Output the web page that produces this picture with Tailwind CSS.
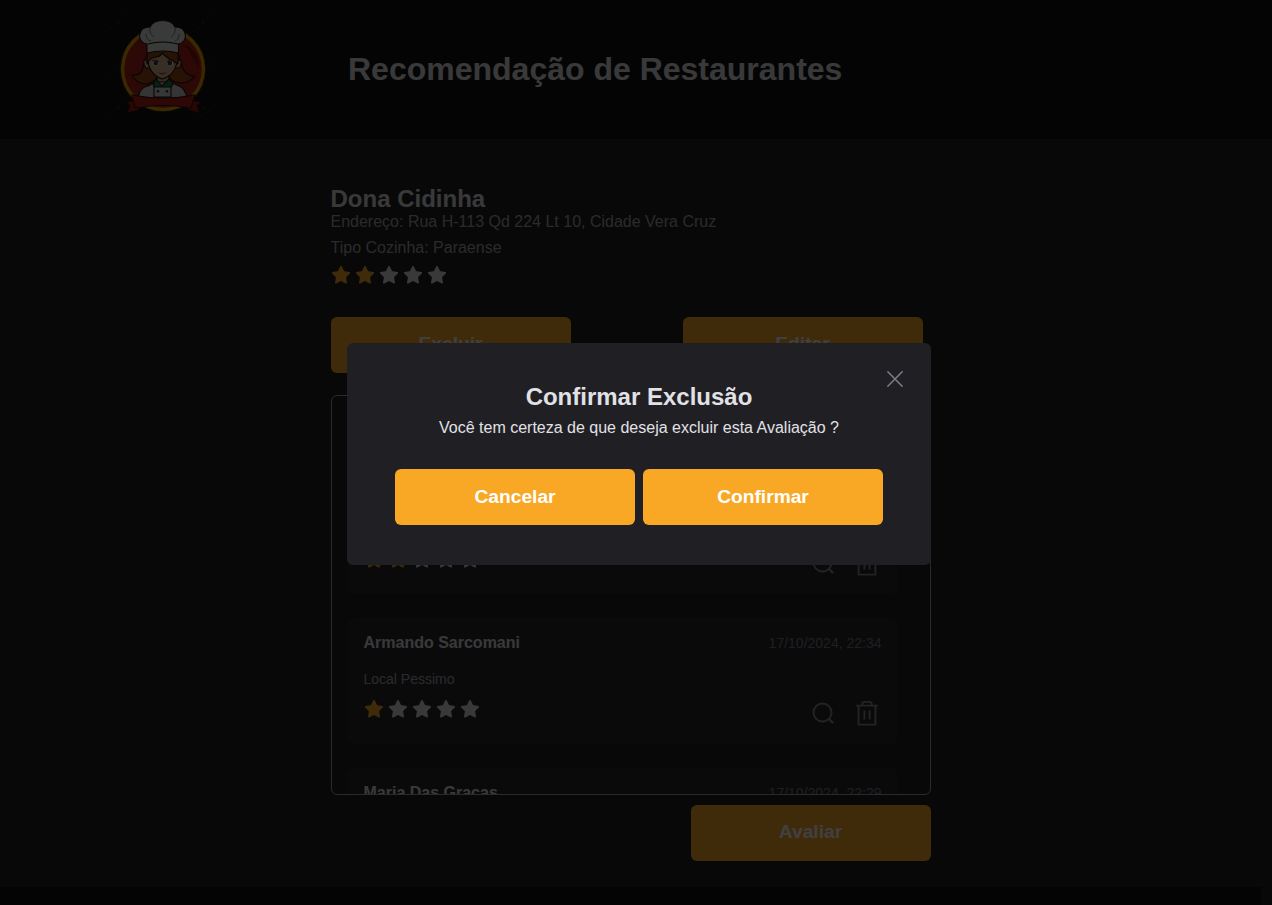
<!DOCTYPE html>
<html lang="pt-BR">
<head>
<meta charset="utf-8">
<title>Recomendação de Restaurantes</title>
<script src="https://cdn.jsdelivr.net/npm/@tailwindcss/browser@4"></script>
</head>
<body class="h-[905px] overflow-hidden bg-[#202020] font-['Liberation_Sans',Arial,sans-serif] text-[#e1e1e6]">
<svg class="hidden">
  <symbol id="star" viewBox="0 0 20 20"><path d="M10 1.8 12.5 6.9 18.2 7.8 14.1 11.9 15.1 17.6 10 15 4.900 17.6 5.900 11.9 1.800 7.8 7.5 6.9Z" fill="currentColor" stroke="currentColor" stroke-width="1.8" stroke-linejoin="round"/></symbol>
  <symbol id="search" viewBox="0 0 24 24"><circle cx="11.5" cy="11.5" r="9" fill="none" stroke="currentColor" stroke-width="2"/><path d="m17.8 17.8 4.4 4.4" stroke="currentColor" stroke-width="2.4"/></symbol>
  <symbol id="trash" viewBox="0 0 24 26"><path d="M1.2 5.6H22.8M3.6 5.6V24.6H20.4V5.6M7.4 5.2V3.8Q7.4 1.9 9.3 1.9H14.7Q16.6 1.9 16.6 3.8V5.2M9.4 10.6V19.6M14.6 10.6V19.6" fill="none" stroke="currentColor" stroke-width="1.9"/></symbol>
</svg>

<header class="flex h-[139px] items-start bg-[#101010]">
  <svg class="ml-[100px] h-[145px] w-[130px] shrink-0" viewBox="0 0 130 145" stroke-linejoin="round">
    <g stroke="#303030" stroke-width=".6"><path d="M6 32 28 11M94 32 116 11M6 77 20 61M98 77 115 61M6 120 20 104M98 120 115 104"/></g>
    <g fill="#282828"><circle cx="18" cy="22" r="1.5"/><circle cx="103" cy="22" r="1.5"/><circle cx="18" cy="108" r="1.5"/><circle cx="104" cy="108" r="1.5"/></g>
    <circle cx="63" cy="69" r="40.5" fill="#b02018" stroke="#e8a000" stroke-width="3.6"/>
    <circle cx="63" cy="69" r="42.6" fill="none" stroke="#503000" stroke-width=".6"/>
    <path d="M82 46Q90 48 91 56Q98 62 98 72Q92 84 86 86Q98 78 99 62 96 52 88 45Z" fill="#841610"/>
    <g stroke="#281408" stroke-width="1.1">
      <path d="M48 53Q43 63 43 68Q41 76 32 75Q36 84 47 84Q56 82 58 75H68Q71 83 82 83Q91 82 94 76Q85 76 82 66L78 53Z" fill="#9c481a"/>
      <path d="M47 61Q43 58 44 64Q45 69 49 68M78 61Q82 58 81 64Q80 69 76 68" fill="#dcbc94"/>
      <path d="M57 73V84L62 88 69 84V73Z" fill="#c8a07c"/>
      <path d="M48 53Q46 73 62 79Q79 74 77 53Z" fill="#dcbc94"/>
      <path d="M47 64Q50 57 57 57 61 56 62 53Q68 59 78 64V50H47Z" fill="#9c481a"/>
      <path d="M38 98Q40 87 48 86L56 82H70L79 86Q85 88 87 98Z" fill="#d0d2d2"/>
      <path d="M53 84 56 79 62 86 69 79 73 84 70 89H55Z" fill="#108060"/>
      <path d="M54 87H71V97H54Z" fill="#d8dada"/>
      <path d="M47 44Q40 43 39.5 36Q40 27 50 27Q53 20.5 63 20.5Q72 20.5 75 27Q85 27 85.500 36Q85 43 78.500 44V53Q63 49 47 53Z" fill="#e4e6e6"/>
      <path d="M48 44Q63 40 78 44" fill="none"/>
      <path d="M50 27Q49 34 54 37M75 27Q76 34 71 37M46 34Q46 40 51 41M79 34Q79 40 75 41" fill="none" stroke="#707474" stroke-width=".9"/>
      <path d="M31 101 26 102 30 106 27 113 39 110 38 100ZM95 101 101 102 97 106 100 113 88 110 89 100Z" fill="#a01810"/>
      <path d="M32 95Q63 101 95 95L91 108Q63 103 35 108Z" fill="#b8221a"/>
    </g>
    <g fill="#f4f4f4"><ellipse cx="55.500" cy="63" rx="3.200" ry="2.800"/><ellipse cx="70" cy="63" rx="3.200" ry="2.800"/></g>
    <g fill="#34343c"><circle cx="55.700" cy="63" r="2.300"/><circle cx="69.800" cy="63" r="2.300"/><circle cx="58" cy="91.300" r="1.300"/><circle cx="67" cy="91.300" r="1.300"/></g>
    <path d="M52 61Q55 58.500 59 61.500M67 61.500Q70 58.500 74 61" fill="none" stroke="#302010" stroke-width=".9"/>
    <path d="M58 72Q62 74 67 72Q62 77 58 72Z" fill="#d03028"/>
  </svg>
  <h1 class="mt-[51px] ml-[118px] text-[32px] leading-9 font-bold whitespace-nowrap">Recomendação de Restaurantes</h1>
</header>

<div class="w-[1261px]">
<main class="mx-auto flex h-[748px] w-[600px] flex-col pt-[46px]">
  <h2 class="text-2xl leading-[27px] font-bold">Dona Cidinha</h2>
  <p class="-mt-px h-[26px] text-base leading-[22px] text-[#a8a8b3]">Endereço: Rua H-113 Qd 224 Lt 10, Cidade Vera Cruz</p>
  <p class="h-7 text-base leading-[22px] text-[#a8a8b3]">Tipo Cozinha: Paraense</p>
  <div class="flex gap-1 text-[#e4e4e4]"><svg class="size-5 text-[#f9a826]"><use href="#star"/></svg><svg class="size-5 text-[#f9a826]"><use href="#star"/></svg><svg class="size-5"><use href="#star"/></svg><svg class="size-5"><use href="#star"/></svg><svg class="size-5"><use href="#star"/></svg></div>
  <div class="mt-8 flex gap-28">
    <button class="h-14 w-60 shrink-0 rounded-md bg-[#f9a826] pb-0.5 text-[19.2px] font-bold text-white">Excluir</button>
    <button class="h-14 w-60 shrink-0 rounded-md bg-[#f9a826] pb-0.5 text-[19.2px] font-bold text-white">Editar</button>
  </div>
  <section class="mt-[22px] flex h-[400px] shrink-0 flex-col justify-start gap-6 overflow-hidden rounded-md border border-[#a8a8a8] pt-[72px] pl-4">
    <article class="flex h-[126px] w-[550px] shrink-0 flex-col rounded-lg bg-[#29292e] px-4 pt-4">
      <div class="flex justify-between"><strong class="text-base leading-[18px]">José Silva</strong><time class="text-sm leading-[18px] text-[#7c7c8a]">17/10/2024, 22:40</time></div>
      <p class="mt-[19px] text-sm leading-4 text-[#a8a8b3]">Local Ruim</p>
      <div class="flex justify-between">
        <div class="mt-3 flex gap-1 text-[#e4e4e4]"><svg class="size-5 text-[#f9a826]"><use href="#star"/></svg><svg class="size-5 text-[#f9a826]"><use href="#star"/></svg><svg class="size-5"><use href="#star"/></svg><svg class="size-5"><use href="#star"/></svg><svg class="size-5"><use href="#star"/></svg></div>
        <div class="mt-[13px] mr-[3px] flex gap-5 text-[#8c8c94]"><svg class="mt-px size-6"><use href="#search"/></svg><svg class="h-[26px] w-6"><use href="#trash"/></svg></div>
      </div>
    </article>
    <article class="flex h-[126px] w-[550px] shrink-0 flex-col rounded-lg bg-[#29292e] px-4 pt-4">
      <div class="flex justify-between"><strong class="text-base leading-[18px]">Armando Sarcomani</strong><time class="text-sm leading-[18px] text-[#7c7c8a]">17/10/2024, 22:34</time></div>
      <p class="mt-[19px] text-sm leading-4 text-[#a8a8b3]">Local Pessimo</p>
      <div class="flex justify-between">
        <div class="mt-3 flex gap-1 text-[#e4e4e4]"><svg class="size-5 text-[#f9a826]"><use href="#star"/></svg><svg class="size-5"><use href="#star"/></svg><svg class="size-5"><use href="#star"/></svg><svg class="size-5"><use href="#star"/></svg><svg class="size-5"><use href="#star"/></svg></div>
        <div class="mt-[13px] mr-[3px] flex gap-5 text-[#8c8c94]"><svg class="mt-px size-6"><use href="#search"/></svg><svg class="h-[26px] w-6"><use href="#trash"/></svg></div>
      </div>
    </article>
    <article class="flex h-[126px] w-[550px] shrink-0 flex-col rounded-lg bg-[#29292e] px-4 pt-4">
      <div class="flex justify-between"><strong class="text-base leading-[18px]">Maria Das Graças</strong><time class="text-sm leading-[18px] text-[#7c7c8a]">17/10/2024, 22:29</time></div>
    </article>
  </section>
  <button class="mt-2.5 h-14 w-60 shrink-0 self-end rounded-md bg-[#f9a826] pb-0.5 text-[19.2px] font-bold text-white">Avaliar</button>
</main>
<footer class="h-[18px] bg-[#101010]"></footer>
</div>

<div class="fixed inset-0 bg-black/75"></div>
<div role="dialog" class="fixed top-[343px] left-[347px] flex h-[222px] w-[584px] flex-col items-center rounded-md bg-[#202024] pt-10">
  <button class="absolute top-6 right-6 size-6" aria-label="Fechar"><svg viewBox="0 0 24 24" class="size-6 text-[#7c7c8a]"><path d="m4.8 4.8 14.4 14.4m0-14.4-14.4 14.4" stroke="currentColor" stroke-width="1.500" stroke-linecap="round"/></svg></button>
  <h2 class="text-2xl leading-[27px] font-bold">Confirmar Exclusão</h2>
  <p class="mt-[7px] text-base leading-[22px]">Você tem certeza de que deseja excluir esta Avaliação ?</p>
  <div class="mt-[30px] flex gap-2">
    <button class="h-14 w-60 rounded-md bg-[#f9a826] text-[19.2px] font-bold text-white">Cancelar</button>
    <button class="h-14 w-60 rounded-md bg-[#f9a826] text-[19.2px] font-bold text-white">Confirmar</button>
  </div>
</div>
</body>
</html>
